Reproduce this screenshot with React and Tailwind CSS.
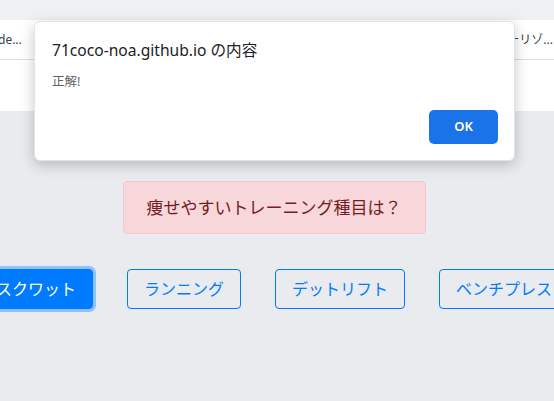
import React from 'react';

const font = { fontFamily: '"Noto Sans", "Noto Sans CJK JP", sans-serif' };

const choices = ['スクワット', 'ランニング', 'デットリフト', 'ベンチプレス'];

const App = () => {
  return (
    <div className="relative w-[554px] h-[401px] overflow-hidden bg-[#e9ebef]" style={font}>
      {/* browser chrome */}
      <div className="h-[20px] bg-[#eff0f2]" />
      <div className="h-[40px] bg-white border-b border-[#dcdde0] flex items-center justify-between text-[12px] text-[#3c4043]">
        <span className="-ml-[2px]">de...</span>
        <span className="mr-[1px]">ーリゾ...</span>
      </div>
      <div className="h-[51px] bg-white" />

      {/* page */}
      <div className="w-[548px] flex flex-col items-center">
        <div className="mt-[70px] w-[303px] h-[53px] flex items-center justify-center rounded-[4px] border border-[#f5c6cb] bg-[#f8d7da] text-[#721c24] text-[17px]">
          痩せやすいトレーニング種目は？
        </div>
        <div className="mt-[35px] w-full flex justify-center gap-[34px]">
          {choices.map((c, i) => (
            <button
              key={c}
              className={
                i === 0
                  ? 'shrink-0 h-[40px] px-[16px] rounded-[4px] border border-[#007bff] bg-[#007bff] text-white text-[16px] ring-[3px] ring-[#8fc0ff]'
                  : 'shrink-0 h-[40px] px-[16px] rounded-[4px] border border-[#007bff] text-[#007bff] text-[16px]'
              }
            >
              {c}
            </button>
          ))}
        </div>
      </div>

      {/* alert dialog */}
      <div className="absolute left-[34px] top-[21px] w-[481px] h-[140px] bg-white rounded-[6px] shadow-[0_4px_14px_rgba(0,0,0,0.22)] border border-[#e2e3e5]">
        <div className="pl-[17px] pt-[17px] text-[15.6px] text-[#202124] leading-[22px]">
          71coco-noa.github.io の内容
        </div>
        <div className="pl-[17px] pt-[13px] text-[12.5px] text-[#5f6368] leading-[16px]">正解!</div>
        <div className="absolute right-[16px] bottom-[16px]">
          <button className="w-[69px] h-[34px] rounded-[5px] bg-[#1a73e8] text-white text-[13px] font-semibold">
            OK
          </button>
        </div>
      </div>
    </div>
  );
};

export default App;
